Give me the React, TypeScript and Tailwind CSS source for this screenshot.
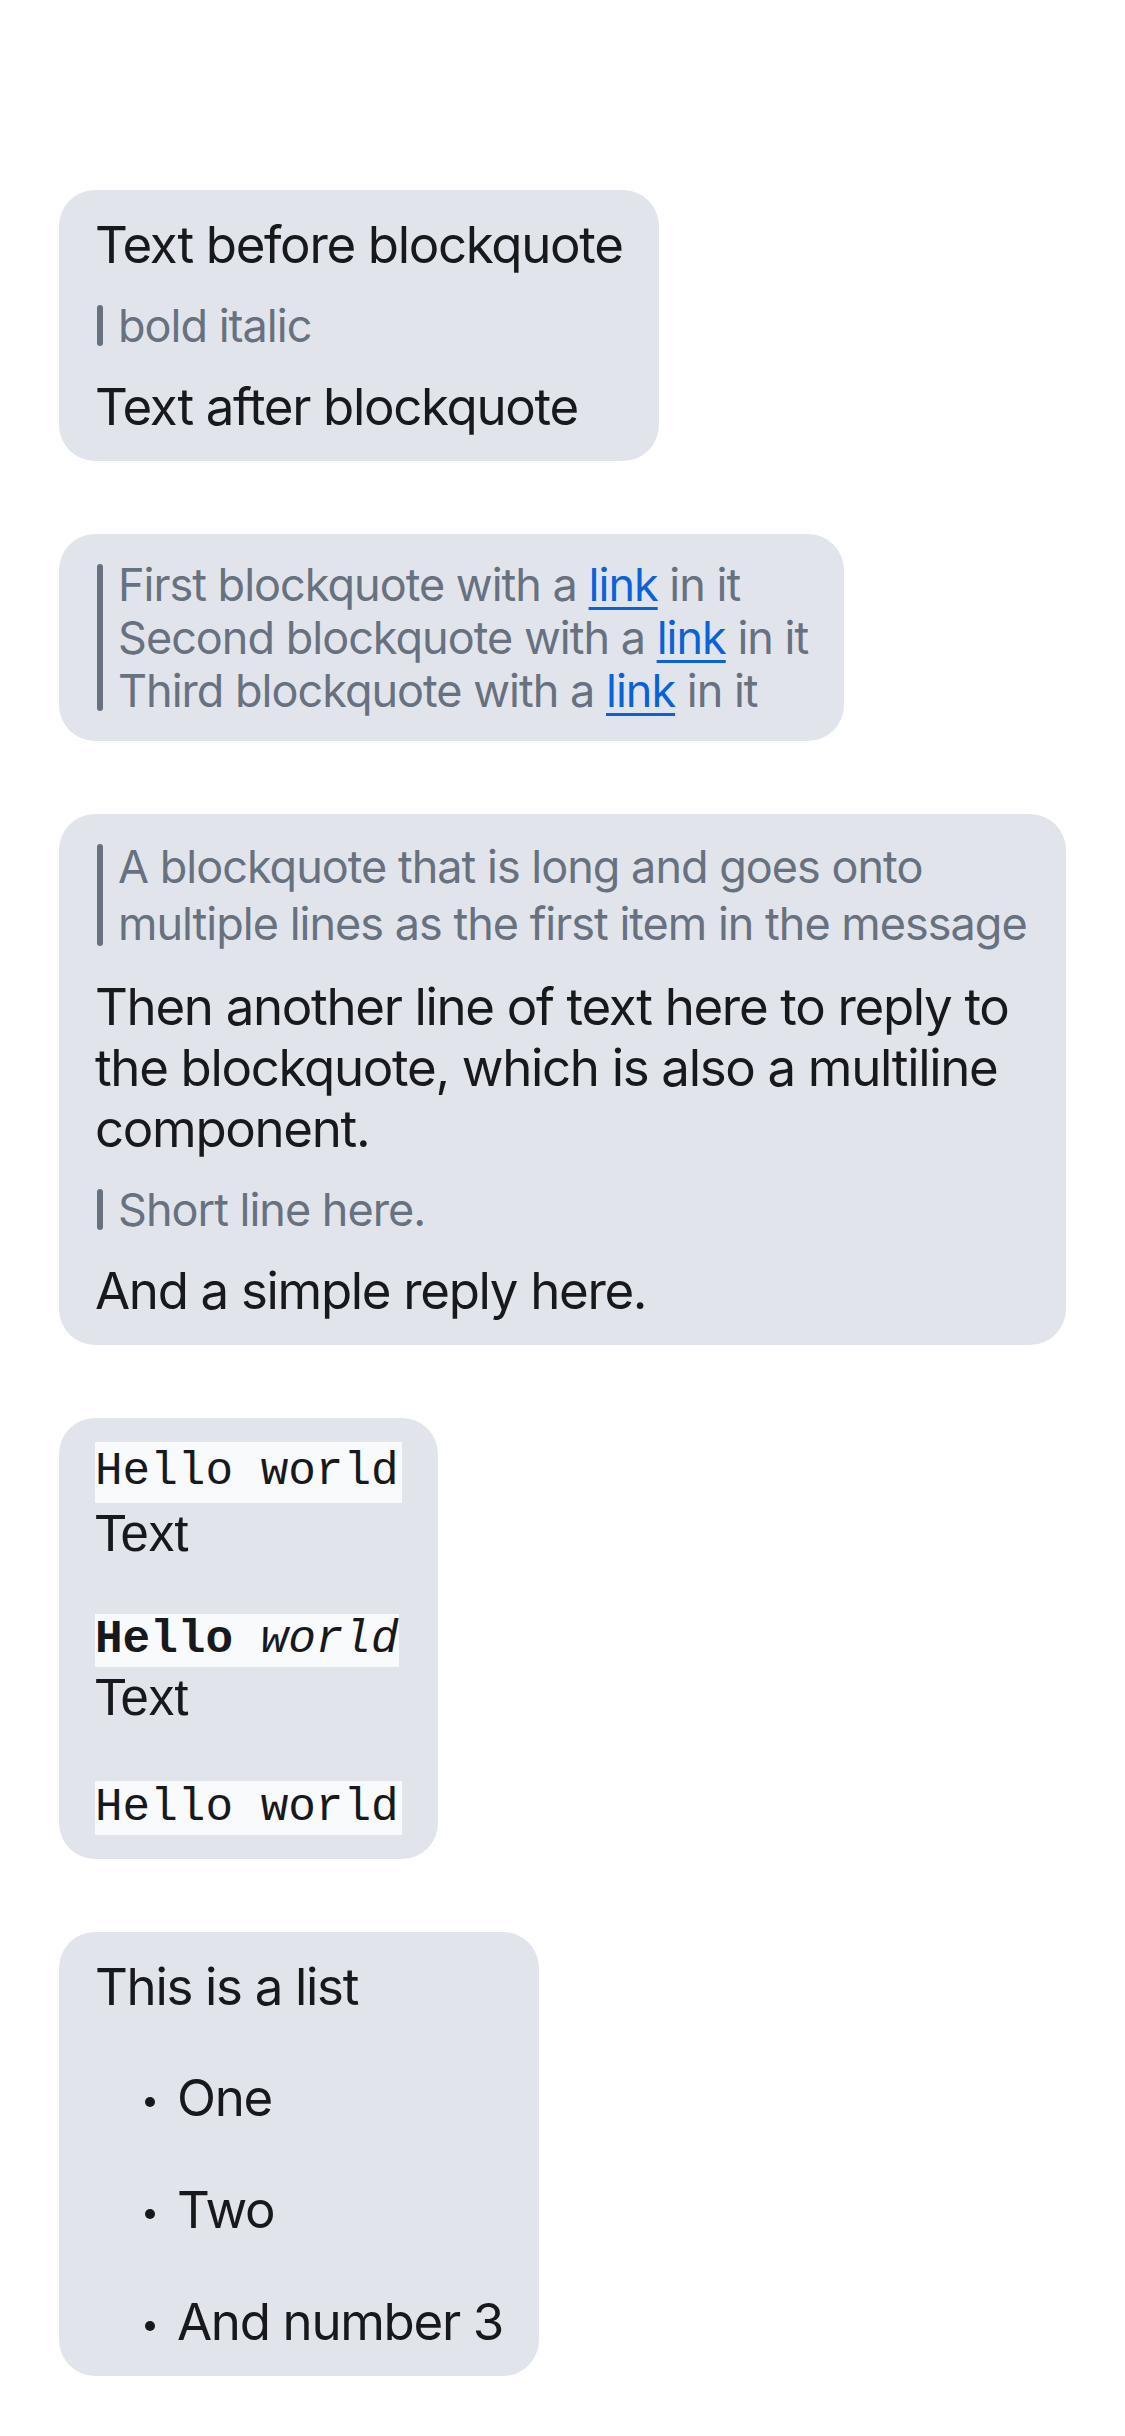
import type { ReactNode } from 'react'

const Bubble = ({ children, className = '' }: { children: ReactNode; className?: string }) => (
  <div
    className={`w-fit max-w-[1007px] rounded-[36px] bg-[#e1e5eb] px-[36px] py-[24px] flex flex-col gap-[24px] ${className}`}
  >
    {children}
  </div>
)

const Line = ({ children }: { children: ReactNode }) => (
  <p className="text-[51px] leading-[61px] tracking-[-0.026em] text-[#17191d]">{children}</p>
)

const Quote = ({ children, lh = 'leading-[53px]' }: { children: ReactNode; lh?: string }) => (
  <div className="flex gap-[15px]">
    <div className="ml-[2px] my-[6px] w-[6px] shrink-0 rounded-full bg-[#687180]" />
    <div className={`text-[45px] ${lh} tracking-[-0.022em] text-[#687180]`}>{children}</div>
  </div>
)

const Link = ({ children }: { children: ReactNode }) => (
  <a className="text-[#0a63d6] underline decoration-[3px] underline-offset-[6px]">{children}</a>
)

const Code = ({ children, h }: { children: ReactNode; h: string }) => (
  <div className={`w-fit bg-[#f9fafc] font-['Liberation_Mono',monospace] text-[46px] text-[#17191d] whitespace-pre ${h}`}>
    {children}
  </div>
)

export default function App() {
  return (
    <div className="min-h-screen bg-white pt-[190px] pb-[60px] pl-[59px] flex flex-col gap-[73px] font-['Inter',sans-serif]">
      <Bubble>
        <Line>Text before blockquote</Line>
        <Quote>bold italic</Quote>
        <Line>Text after blockquote</Line>
      </Bubble>

      <Bubble>
        <Quote>
          <p>First blockquote with a <Link>link</Link> in it</p>
          <p>Second blockquote with a <Link>link</Link> in it</p>
          <p>Third blockquote with a <Link>link</Link> in it</p>
        </Quote>
      </Bubble>

      <Bubble>
        <Quote lh="leading-[57px]">
          A blockquote that is long and goes onto multiple lines as the first item in the message
        </Quote>
        <Line>
          Then another line of text here to reply to the blockquote, which is also a multiline component.
        </Line>
        <Quote>Short line here.</Quote>
        <Line>And a simple reply here.</Line>
      </Bubble>

      <Bubble className="!gap-0">
        <Code h="h-[61px] leading-[61px] pr-[3px]">Hello world</Code>
        <p className="h-[61px] text-[51px] leading-[61px] text-[#17191d] font-['Liberation_Sans',sans-serif]">Text</p>
        <div className="h-[50px]" />
        <Code h="h-[53px] leading-[53px] flex">
          <span className="font-bold">Hello </span>
          <span className="italic">world</span>
        </Code>
        <p className="h-[61px] text-[51px] leading-[61px] text-[#17191d] font-['Liberation_Sans',sans-serif]">Text</p>
        <div className="h-[53px]" />
        <Code h="h-[54px] leading-[54px] pr-[3px]">Hello world</Code>
      </Bubble>

      <Bubble className="!gap-[50px]">
        <Line>This is a list</Line>
        <ul className="flex flex-col gap-[51px] pl-[50px]">
          {['One', 'Two', 'And number 3'].map((item) => (
            <li key={item} className="flex items-center gap-[22px]">
              <span className="mt-[8px] h-[10px] w-[10px] shrink-0 rounded-full bg-[#17191d]" />
              <Line>{item}</Line>
            </li>
          ))}
        </ul>
      </Bubble>
    </div>
  )
}
